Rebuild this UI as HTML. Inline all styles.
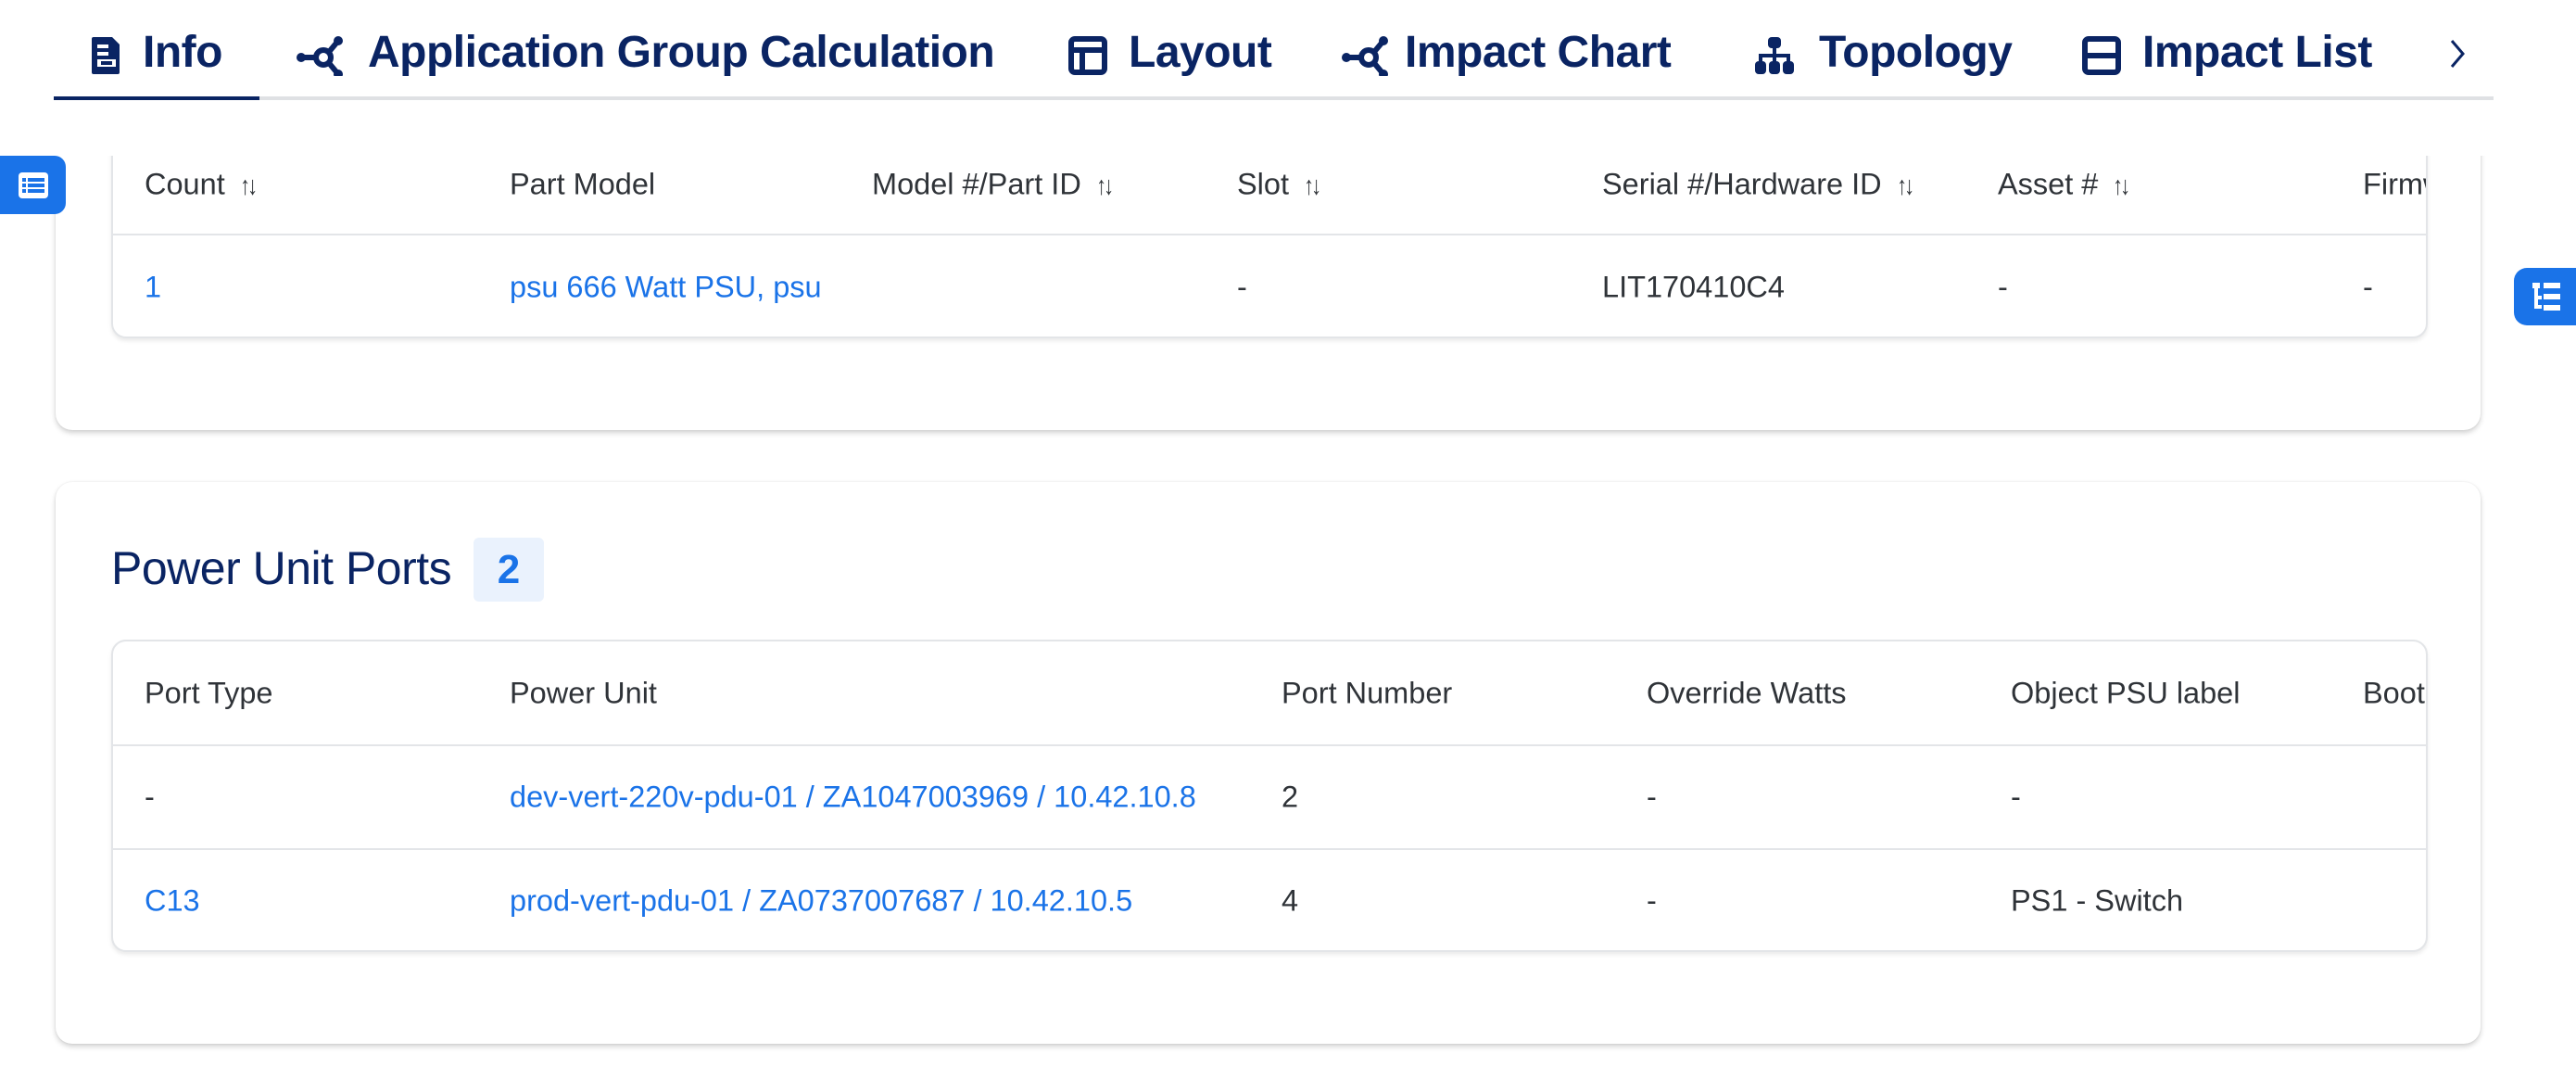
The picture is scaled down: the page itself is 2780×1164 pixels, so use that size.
<!DOCTYPE html>
<html><head><meta charset="utf-8"><style>
*{box-sizing:border-box;margin:0;padding:0}
body{width:2780px;height:1164px;background:#fff;position:relative;overflow:hidden;font-family:"Liberation Sans",sans-serif;}
.abs{position:absolute}
.tab{position:absolute;top:26px;height:60px;display:flex;align-items:center;color:#0a2463;font-size:48px;font-weight:bold;letter-spacing:-0.5px;white-space:nowrap}
.tab svg{position:absolute;top:12px}
.card{position:absolute;left:60px;width:2617px;background:#fff;border-radius:18px;box-shadow:0 3px 6px rgba(0,0,0,.18),0 0 2px rgba(0,0,0,.08)}
.tbl{position:absolute;left:120px;width:2500px;border:2px solid #e3e5e8;border-radius:16px;overflow:hidden;background:#fff;box-shadow:0 3px 4px rgba(0,0,0,.08)}
.t{position:absolute;font-size:32.5px;color:#2f3338;white-space:nowrap;transform:translateY(-50%)}
.h{color:#2f3338}
.s{display:inline-block;margin-left:14px;font-size:28px;letter-spacing:-4px;transform:scaleX(.8)}
.l{color:#1a73e8}
.line{position:absolute;left:0;right:0;height:2px;background:#e3e5e8}
</style></head><body>

<div class="card" style="top:-40px;height:504px"></div>
<div class="tbl" style="top:100px;height:265px">
  <div class="t h" style="left:34px;top:97px">Count<span class="s">↑↓</span></div>
  <div class="t h" style="left:428px;top:97px">Part Model</div>
  <div class="t h" style="left:819px;top:97px">Model #/Part ID<span class="s">↑↓</span></div>
  <div class="t h" style="left:1213px;top:97px">Slot<span class="s">↑↓</span></div>
  <div class="t h" style="left:1607px;top:97px">Serial #/Hardware ID<span class="s">↑↓</span></div>
  <div class="t h" style="left:2034px;top:97px">Asset #<span class="s">↑↓</span></div>
  <div class="t h" style="left:2428px;top:97px">Firmware</div>
  <div class="line" style="top:150px"></div>
  <div class="t l" style="left:34px;top:208px">1</div>
  <div class="t l" style="left:428px;top:208px">psu 666 Watt PSU, psu</div>
  <div class="t" style="left:1213px;top:208px">-</div>
  <div class="t" style="left:1607px;top:208px">LIT170410C4</div>
  <div class="t" style="left:2034px;top:208px">-</div>
  <div class="t" style="left:2428px;top:208px">-</div>
</div>

<!-- header -->
<div class="abs" style="left:0;top:0;width:2780px;height:168px;background:#fff"></div>
<div class="abs" style="left:58px;top:104px;width:2633px;height:4px;background:#dfe1e4"></div>
<div class="abs" style="left:58px;top:104px;width:222px;height:4px;background:#0a2463"></div>

<div class="tab" style="left:97px"><svg width="36" height="44" viewBox="0 0 18 22" style="left:0"><path d="M2 1h10l4 4v15a1 1 0 0 1-1 1H2a1 1 0 0 1-1-1V2a1 1 0 0 1 1-1z" fill="#0a2463"/><rect x="4" y="5" width="6" height="2" fill="#fff"/><rect x="4" y="9" width="6" height="2" fill="#fff"/><rect x="4" y="13" width="10" height="4" fill="#fff"/><rect x="6" y="14" width="6" height="2" fill="#0a2463"/></svg><span style="margin-left:57px">Info</span></div>
<div class="tab" style="left:319px"><svg width="56" height="44" viewBox="0 0 28 22" style="left:0"><g stroke="#0a2463" stroke-width="3" fill="none"><circle cx="15" cy="12" r="4"/><path d="M3 12h8M18 9l5-6M18 15l5 6"/></g><circle cx="3" cy="12" r="2.5" fill="#0a2463"/><circle cx="23" cy="3" r="2.5" fill="#0a2463"/><circle cx="23" cy="21" r="2.5" fill="#0a2463"/></svg><span style="margin-left:78px">Application Group Calculation</span></div>
<div class="tab" style="left:1152px"><svg width="44" height="44" viewBox="0 0 22 22" style="left:0"><rect x="2" y="2" width="18" height="18" rx="2" stroke="#0a2463" stroke-width="3" fill="none"/><path d="M2 8h18M8 8v12" stroke="#0a2463" stroke-width="3"/></svg><span style="margin-left:66px">Layout</span></div>
<div class="tab" style="left:1447px"><svg width="56" height="44" viewBox="0 0 28 22" style="left:0"><g stroke="#0a2463" stroke-width="3" fill="none"><circle cx="15" cy="12" r="4"/><path d="M3 12h8M18 9l5-6M18 15l5 6"/></g><circle cx="3" cy="12" r="2.5" fill="#0a2463"/><circle cx="23" cy="3" r="2.5" fill="#0a2463"/><circle cx="23" cy="21" r="2.5" fill="#0a2463"/></svg><span style="margin-left:69px">Impact Chart</span></div>
<div class="tab" style="left:1892px"><svg width="46" height="44" viewBox="0 0 23 22" style="left:0"><rect x="8" y="1" width="7" height="6" rx="2" fill="#0a2463"/><path d="M11.5 7v4M4 15v-4h15v4M11.5 11v4" stroke="#0a2463" stroke-width="2" fill="none"/><rect x="1" y="14" width="6" height="7" rx="2" fill="#0a2463"/><rect x="8.5" y="14" width="6" height="7" rx="2" fill="#0a2463"/><rect x="16" y="14" width="6" height="7" rx="2" fill="#0a2463"/></svg><span style="margin-left:71px">Topology</span></div>
<div class="tab" style="left:2246px"><svg width="44" height="44" viewBox="0 0 22 22" style="left:0"><rect x="2" y="2" width="18" height="18" rx="2" stroke="#0a2463" stroke-width="3" fill="none"/><path d="M2 11h18" stroke="#0a2463" stroke-width="3"/></svg><span style="margin-left:66px">Impact List</span></div>
<div class="tab" style="left:2640px;font-weight:normal"><svg width="22" height="36" viewBox="0 0 11 18" style="left:0;top:14px"><path d="M3 2l6 7-6 7" stroke="#0a2463" stroke-width="1.5" fill="none"/></svg></div>

<!-- floating buttons -->
<div class="abs" style="left:0;top:168px;width:71px;height:63px;background:#1a73e8;border-radius:0 12px 12px 0"><svg width="36" height="36" viewBox="0 0 18 18" style="position:absolute;left:18px;top:14px"><rect x="1" y="2" width="16" height="14" rx="2" fill="#fff"/><g fill="#1a73e8"><rect x="3" y="5" width="2" height="2"/><rect x="6" y="5" width="9" height="2"/><rect x="3" y="8" width="2" height="2"/><rect x="6" y="8" width="9" height="2"/><rect x="3" y="11" width="2" height="2"/><rect x="6" y="11" width="9" height="2"/></g></svg></div>
<div class="abs" style="left:2713px;top:289px;width:80px;height:62px;background:#1a73e8;border-radius:14px 0 0 14px"><svg width="34" height="34" viewBox="0 0 17 17" style="position:absolute;left:18px;top:14px"><g fill="#fff"><rect x="1" y="1" width="4" height="3"/><rect x="7" y="1" width="9" height="3"/><rect x="7" y="7" width="9" height="3"/><rect x="7" y="13" width="9" height="3"/><rect x="2" y="4" width="2" height="11"/><rect x="2" y="8" width="4" height="2"/><rect x="2" y="13" width="4" height="2"/></g></svg></div>

<!-- card 2 -->
<div class="card" style="top:520px;height:606px"></div>
<div class="abs" style="left:120px;top:584px;font-size:50px;color:#0a2463;letter-spacing:-0.5px;white-space:nowrap">Power Unit Ports</div>
<div class="abs" style="left:511px;top:580px;width:76px;height:69px;background:#eaf2fd;border-radius:6px;color:#1a73e8;font-size:44px;font-weight:bold;text-align:center;line-height:69px">2</div>
<div class="tbl" style="top:690px;height:337px">
  <div class="t h" style="left:34px;top:56px">Port Type</div>
  <div class="t h" style="left:428px;top:56px">Power Unit</div>
  <div class="t h" style="left:1261px;top:56px">Port Number</div>
  <div class="t h" style="left:1655px;top:56px">Override Watts</div>
  <div class="t h" style="left:2048px;top:56px">Object PSU label</div>
  <div class="t h" style="left:2428px;top:56px">Boot</div>
  <div class="line" style="top:111px"></div>
  <div class="t" style="left:34px;top:168px">-</div>
  <div class="t l" style="left:428px;top:168px">dev-vert-220v-pdu-01 / ZA1047003969 / 10.42.10.8</div>
  <div class="t" style="left:1261px;top:168px">2</div>
  <div class="t" style="left:1655px;top:168px">-</div>
  <div class="t" style="left:2048px;top:168px">-</div>
  <div class="line" style="top:223px"></div>
  <div class="t l" style="left:34px;top:280px">C13</div>
  <div class="t l" style="left:428px;top:280px">prod-vert-pdu-01 / ZA0737007687 / 10.42.10.5</div>
  <div class="t" style="left:1261px;top:280px">4</div>
  <div class="t" style="left:1655px;top:280px">-</div>
  <div class="t" style="left:2048px;top:280px">PS1 - Switch</div>
</div>
</body></html>
